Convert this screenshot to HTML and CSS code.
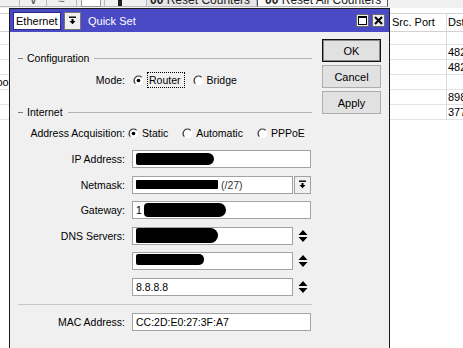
FILE: index.html
```html
<!DOCTYPE html>
<html lang="en">
<head>
  <meta charset="UTF-8">
  <title>Quick Set</title>
  <link rel="stylesheet" href="styles.css">
</head>
<body>
  <svg class="defs" width="0" height="0">
    <defs>
      <symbol id="radio-on" viewBox="0 0 12 12">
        <circle cx="6" cy="6" r="5" fill="#fff"/>
        <path d="M2.6 9.4 A4.8 4.8 0 0 1 9.4 2.6" fill="none" stroke="#3a3a3a" stroke-width="1.4"/>
        <circle cx="6" cy="6" r="2" fill="#000"/>
      </symbol>
      <symbol id="radio-off" viewBox="0 0 12 12">
        <circle cx="6" cy="6" r="5" fill="#fff"/>
        <path d="M2.6 9.4 A4.8 4.8 0 0 1 9.4 2.6" fill="none" stroke="#3a3a3a" stroke-width="1.4"/>
      </symbol>
      <symbol id="drop" viewBox="0 0 9 9">
        <rect x="1" y="0.5" width="7" height="1.4" fill="#000"/>
        <path d="M3.5 3h2v2h2l-3 3.3-3-3.3h2z" fill="#000"/>
      </symbol>
      <symbol id="updown" viewBox="0 0 10 12">
        <path d="M5 0l4.5 5h-9z M0.5 7h9L5 12z" fill="#000"/>
      </symbol>
    </defs>
  </svg>

  <div class="desk">
    <!-- window behind the dialog -->
    <div class="toolbar">
      <span class="tb-btn w20"></span>
      <span class="tb-btn w26">&#8744;</span>
      <span class="tb-btn w29">&#8776;</span>
      <span class="tb-btn w28"><i class="sq"></i></span>
      <span class="tb-btn w42"><i class="stick"></i></span>
      <span class="tab">
        <b>00</b> Reset Counters</span>
      <span class="tab on">
        <b>00</b> Reset All Counters</span>
    </div>

    <div class="list">
      <div class="hd"></div><div class="hd">Src. Port</div><div class="hd">Dst</div>
      <div></div><div></div><div></div>
      <div></div><div></div><div>482</div>
      <div></div><div></div><div>482</div>
      <div class="cut">loop</div><div></div><div></div>
      <div></div><div></div><div>898</div>
      <div></div><div></div><div>377</div>
    </div>

    <!-- Quick Set dialog -->
    <div class="dialog">
      <div class="titlebar">
        <div class="combo">Ethernet</div>
        <div class="tbtn"><svg width="9" height="9"><use href="#drop"/></svg></div>
        <span class="title">Quick Set</span>
        <div class="winbtns">
          <span class="wbtn">
            <svg width="9" height="9" viewBox="0 0 9 9"><rect x="0.5" y="0.5" width="8" height="8" fill="#fff" stroke="#000"/><rect x="0.5" y="0.5" width="8" height="1.5" fill="#000"/></svg>
          </span>
          <span class="wbtn">
            <svg width="9" height="9" viewBox="0 0 9 9"><path d="M1 1l7 7M8 1l-7 7" stroke="#000" stroke-width="2"/></svg>
          </span>
        </div>
      </div>

      <div class="body">
        <div class="form">
          <div class="group">Configuration</div>
          <div class="row mode">
            <span class="lbl">Mode:</span>
            <div class="radios">
              <span class="radio"><svg width="11" height="11"><use href="#radio-on"/></svg><span class="focus">Router</span></span>
              <span class="radio"><svg width="11" height="11"><use href="#radio-off"/></svg>Bridge</span>
            </div>
          </div>

          <div class="group">Internet</div>
          <div class="row acq">
            <span class="lbl">Address Acquisition:</span>
            <div class="radios">
              <span class="radio"><svg width="11" height="11"><use href="#radio-on"/></svg>Static</span>
              <span class="radio"><svg width="11" height="11"><use href="#radio-off"/></svg>Automatic</span>
              <span class="radio"><svg width="11" height="11"><use href="#radio-off"/></svg>PPPoE</span>
            </div>
          </div>

          <div class="fields">
            <span class="lbl">IP Address:</span>
            <div class="field"><span class="blot ip"></span></div>

            <span class="lbl">Netmask:</span>
            <div class="pair">
              <div class="field"><span class="blot mask"></span><span class="dim">(/27)</span></div>
              <span class="side drop"><svg width="9" height="9"><use href="#drop"/></svg></span>
            </div>

            <span class="lbl">Gateway:</span>
            <div class="field">1<span class="blot gw"></span></div>

            <span class="lbl">DNS Servers:</span>
            <div class="pair">
              <div class="field"><span class="blot dns1"></span></div>
              <span class="side"><svg width="10" height="12"><use href="#updown"/></svg></span>
            </div>

            <span class="lbl"></span>
            <div class="pair">
              <div class="field"><span class="blot dns2"></span></div>
              <span class="side"><svg width="10" height="12"><use href="#updown"/></svg></span>
            </div>

            <span class="lbl"></span>
            <div class="pair">
              <div class="field">8.8.8.8</div>
              <span class="side"><svg width="10" height="12"><use href="#updown"/></svg></span>
            </div>
          </div>

          <div class="sep"></div>

          <div class="fields">
            <span class="lbl">MAC Address:</span>
            <div class="field">CC:2D:E0:27:3F:A7</div>
          </div>
        </div>

        <div class="actions">
          <button class="btn default">OK</button>
          <button class="btn">Cancel</button>
          <button class="btn">Apply</button>
        </div>
      </div>
    </div>
  </div>
</body>
</html>
```

FILE: styles.css
```css
body {
  margin: 0;
  width: 463px;
  height: 348px;
  overflow: hidden;
  background: #fff;
  font-family: "Liberation Sans", Arial, sans-serif;
  font-size: 11px;
  color: #000;
}

.defs {
  position: absolute;
}

.desk {
  position: relative;
  height: 348px;
  overflow: hidden;
}

/* background window */
.toolbar {
  height: 8px;
  display: flex;
  background: #f0f0f0;
  overflow: hidden;
}

.tb-btn, .tab {
  margin-top: -8px;
  height: 15px;
  line-height: 15px;
  box-sizing: border-box;
  border: 1px solid #b9b9b9;
  border-left: none;
  text-align: center;
  color: #555;
  font-size: 12px;
}

.w20 { width: 20px; }
.w26 { width: 27px; }
.w29 { width: 30px; }
.w28 { width: 28px; }
.w42 { width: 42px; }

.sq {
  display: inline-block;
  width: 18px;
  height: 12px;
  background: #fff;
  border: 1px solid #999;
}

.stick {
  display: inline-block;
  width: 4px;
  height: 13px;
  background: #222;
  margin-left: -12px;
}

.tab {
  padding: 0 6px 0 3px;
  background: #e6e6e6;
  white-space: nowrap;
  color: #222;
}

.tab.on {
  background: #f9f9f9;
  border-left: 1px solid #555;
  border-right: 1px solid #555;
  padding-left: 7px;
}

.list {
  margin-top: 5px;
  display: grid;
  grid-template-columns: 390px 56px 1fr;
  grid-template-rows: 19px 13px repeat(5, 15px);
}

.list div {
  box-sizing: border-box;
  border-bottom: 1px solid #e3e3e3;
  padding-left: 2px;
  line-height: 14px;
  white-space: nowrap;
  overflow: hidden;
}

.list div:nth-child(3n) {
  border-left: 1px solid #dadada;
  padding-left: 1px;
}

.list .hd {
  border-top: 1px solid #d2d2d2;
  border-bottom: 1px solid #d2d2d2;
  line-height: 17px;
}

.list .cut {
  padding-left: 0;
  text-indent: -6px;
}

/* dialog */
.dialog {
  position: absolute;
  left: 9px;
  top: 8px;
  width: 381px;
  height: 350px;
  box-sizing: border-box;
  border: 1px solid #1c1c1c;
  background: #f0f0f0;
}

.titlebar {
  height: 23px;
  display: flex;
  align-items: center;
  padding: 0 4px 0 3px;
  background: #4a4ac6;
}

.combo {
  width: 48px;
  height: 18px;
  box-sizing: border-box;
  background: #fff;
  border: 1px solid #2c2c7a;
  padding-left: 2px;
  line-height: 16px;
  font-size: 11px;
}

.tbtn {
  width: 17px;
  height: 18px;
  margin-left: 3px;
  box-sizing: border-box;
  background: #f0f0f0;
  border: 1px solid #777;
  display: flex;
  align-items: center;
  justify-content: center;
}

.title {
  margin-left: 7px;
  color: #fff;
  font-size: 11px;
}

.winbtns {
  margin-left: auto;
  display: flex;
  gap: 3px;
}

.wbtn {
  width: 13px;
  height: 13px;
  box-sizing: border-box;
  background: #ececec;
  border: 1px solid #6c6c6c;
  display: flex;
  align-items: center;
  justify-content: center;
}

.body {
  display: flex;
}

.form {
  width: 302px;
  padding-top: 19px;
  font-size: 10.5px;
}

.group {
  height: 14px;
  display: flex;
  align-items: center;
  padding-left: 8px;
}

.group::before {
  content: "";
  width: 5px;
  height: 1px;
  background: #7d7d7d;
  margin-right: 4px;
}

.group::after {
  content: "";
  flex: 1;
  height: 1px;
  background: #b3b3b3;
  margin-left: 5px;
}

.row {
  display: grid;
  grid-template-columns: 115px auto;
  column-gap: 8px;
  height: 16px;
  align-items: center;
}

.mode {
  margin-top: 7px;
  margin-bottom: 17px;
}

.acq {
  margin-top: 6px;
  column-gap: 3px;
}

.lbl {
  text-align: right;
  white-space: nowrap;
}

.radios {
  display: flex;
  align-items: center;
  gap: 8px;
}

.acq .radios {
  gap: 14px;
}

.radio {
  display: inline-flex;
  align-items: center;
  gap: 3px;
}

.focus {
  border: 1px dotted #000;
  padding: 1px 3px 1px 1px;
}

.fields {
  display: grid;
  grid-template-columns: 115px 179px;
  column-gap: 7px;
  row-gap: 7.6px;
  grid-auto-rows: 18px;
  align-items: center;
  margin-top: 9px;
}

.field {
  height: 18px;
  box-sizing: border-box;
  background: #fff;
  border: 1px solid #a3a3a3;
  padding-left: 3px;
  display: flex;
  align-items: center;
  white-space: nowrap;
  min-width: 0;
}

.pair {
  display: flex;
  gap: 1px;
}

.pair .field {
  flex: 1;
}

.side {
  flex: none;
  width: 17px;
  height: 18px;
  box-sizing: border-box;
  display: flex;
  align-items: center;
  justify-content: center;
}

.side.drop {
  background: #f0f0f0;
  border: 1px solid #a3a3a3;
}

.blot {
  display: inline-block;
  background: #000;
}

.ip {
  width: 78px;
  height: 12px;
  border-radius: 3px 7px 7px 3px;
}

.mask {
  width: 82px;
  height: 9px;
  border-radius: 1px;
}

.dim {
  margin-left: 3px;
  color: #333;
}

.gw {
  width: 82px;
  height: 14px;
  border-radius: 4px 7px 7px 4px;
  margin-left: 2px;
}

.dns1 {
  width: 82px;
  height: 15px;
  border-radius: 2px 8px 8px 2px;
}

.dns2 {
  width: 68px;
  height: 11px;
  border-radius: 2px 5px 5px 2px;
  margin-top: -3px;
}

.sep {
  height: 1px;
  background: #c6c6c6;
  margin: 8px 0 0 8px;
}

.form > .fields:last-child {
  margin-top: 8px;
}

.actions {
  margin-left: 10px;
  padding-top: 7px;
  display: flex;
  flex-direction: column;
  gap: 3px;
}

.btn {
  width: 59px;
  height: 23px;
  box-sizing: border-box;
  background: #e1e1e1;
  border: 1px solid #adadad;
  font-family: "Liberation Sans", Arial, sans-serif;
  font-size: 11px;
  color: #000;
  padding: 0;
}

.btn.default {
  border: 1px solid #111;
  box-shadow: inset 0 0 0 1px #8a8a8a;
}
```
